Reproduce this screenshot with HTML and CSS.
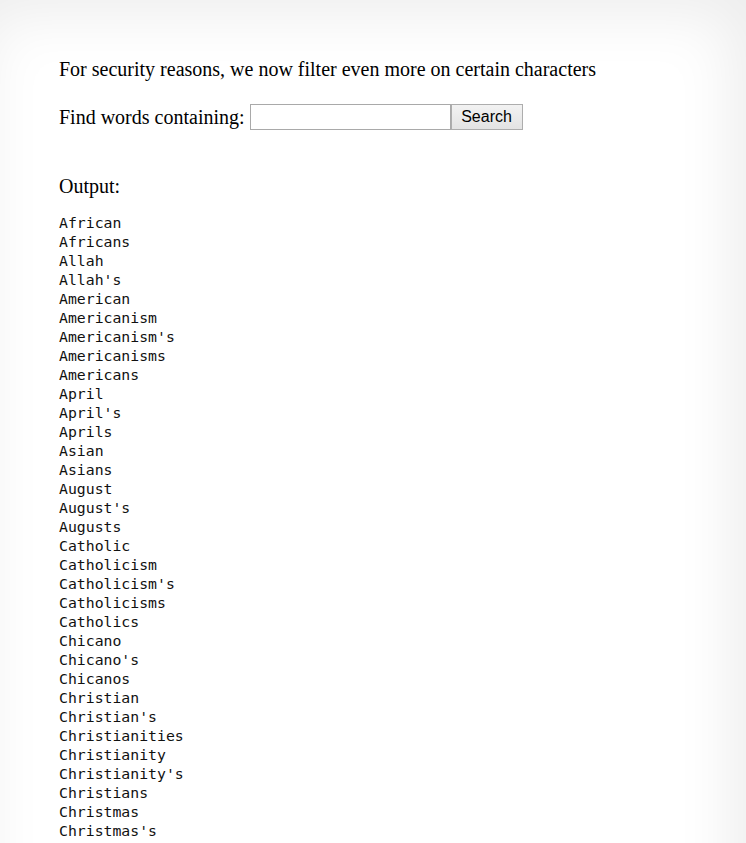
FILE: index.html
```html
<!DOCTYPE html>
<html>
<head>
<meta charset="utf-8">
<title>natas</title>
<link rel="stylesheet" href="styles.css">
</head>
<body>
<div class="page">
  <p class="intro">For security reasons, we now filter even more on certain characters</p>
  <form class="search-row" onsubmit="return false">
    <label class="label" for="needle">Find words containing:</label>
    <input class="field" id="needle" type="text" name="needle">
    <button class="btn" type="submit">Search</button>
  </form>
  <p class="output-title">Output:</p>
<pre class="output">African
Africans
Allah
Allah's
American
Americanism
Americanism's
Americanisms
Americans
April
April's
Aprils
Asian
Asians
August
August's
Augusts
Catholic
Catholicism
Catholicism's
Catholicisms
Catholics
Chicano
Chicano's
Chicanos
Christian
Christian's
Christianities
Christianity
Christianity's
Christians
Christmas
Christmas's</pre>
</div>
</body>
</html>
```
FILE: styles.css
```css
html, body {
  margin: 0;
  padding: 0;
}
body {
  background: #fff;
  font-family: "Liberation Serif", "Times New Roman", serif;
  color: #000;
  overflow: hidden;
  height: 843px;
}
.page {
  box-sizing: border-box;
  height: 1000px;
  background: #fff;
  box-shadow: inset -14px 14px 60px rgba(0, 0, 0, 0.075);
  padding: 58px 0 0 59px;
}
.intro {
  margin: 0;
  font-size: 20px;
  line-height: 23px;
}
.search-row {
  margin: 23px 0 0 0;
  display: flex;
  align-items: center;
  height: 26px;
}
.label {
  font-size: 20px;
  line-height: 23px;
  margin-right: 5px;
}
.field {
  box-sizing: border-box;
  width: 201px;
  height: 26px;
  margin: 0;
  border: 1px solid #a9a9a9;
  background: #fff;
  padding: 0 3px;
}
.btn {
  box-sizing: border-box;
  width: 72px;
  height: 26px;
  margin: 0;
  border: 1px solid #adadad;
  background: linear-gradient(#f2f2f2, #e3e3e3);
  font-family: "Liberation Sans", Arial, sans-serif;
  font-size: 16px;
  color: #000;
  padding: 0;
}
.output-title {
  margin: 45px 0 0 0;
  font-size: 20px;
  line-height: 23px;
}
.output {
  margin: 15px 0 0 0;
  font-family: "DejaVu Sans Mono", monospace;
  font-size: 14.8px;
  line-height: 19px;
  color: #111;
}
```
